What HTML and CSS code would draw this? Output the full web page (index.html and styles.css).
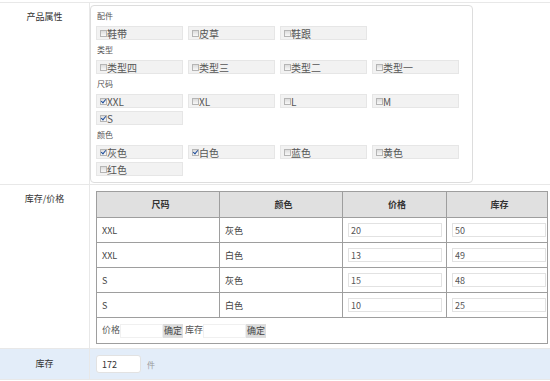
FILE: index.html
```html
<!DOCTYPE html>
<html>
<head>
    <meta charset="utf-8"/>
    <title>商品库存</title>
    <link rel="stylesheet" href="styles.css">
</head>
<body>
<table class="form">
    <tr class="row-attr">
        <td class="label">产品属性</td>
        <td class="field">
            <div class="attr-box">
                <div class="group">
                    <div class="group-title">配件</div>
                    <div class="options">
                        <label class="opt"><span class="cb"></span>鞋带</label>
                        <label class="opt"><span class="cb"></span>皮草</label>
                        <label class="opt"><span class="cb"></span>鞋跟</label>
                    </div>
                </div>
                <div class="group">
                    <div class="group-title">类型</div>
                    <div class="options">
                        <label class="opt"><span class="cb"></span>类型四</label>
                        <label class="opt"><span class="cb"></span>类型三</label>
                        <label class="opt"><span class="cb"></span>类型二</label>
                        <label class="opt"><span class="cb"></span>类型一</label>
                    </div>
                </div>
                <div class="group">
                    <div class="group-title">尺码</div>
                    <div class="options">
                        <label class="opt"><span class="cb checked"></span>XXL</label>
                        <label class="opt"><span class="cb"></span>XL</label>
                        <label class="opt"><span class="cb"></span>L</label>
                        <label class="opt"><span class="cb"></span>M</label>
                        <label class="opt"><span class="cb checked"></span>S</label>
                    </div>
                </div>
                <div class="group">
                    <div class="group-title">颜色</div>
                    <div class="options">
                        <label class="opt"><span class="cb checked"></span>灰色</label>
                        <label class="opt"><span class="cb checked"></span>白色</label>
                        <label class="opt"><span class="cb"></span>蓝色</label>
                        <label class="opt"><span class="cb"></span>黄色</label>
                        <label class="opt"><span class="cb"></span>红色</label>
                    </div>
                </div>
            </div>
        </td>
    </tr>
    <tr class="row-sku">
        <td class="label">库存/价格</td>
        <td class="field">
            <table class="sku">
                <tr>
                    <th class="c-size">尺码</th>
                    <th class="c-color">颜色</th>
                    <th class="c-price">价格</th>
                    <th class="c-stock">库存</th>
                </tr>
                <tr>
                    <td>XXL</td>
                    <td>灰色</td>
                    <td><input class="cell-input" value="20"></td>
                    <td><input class="cell-input" value="50"></td>
                </tr>
                <tr>
                    <td>XXL</td>
                    <td>白色</td>
                    <td><input class="cell-input" value="13"></td>
                    <td><input class="cell-input" value="49"></td>
                </tr>
                <tr>
                    <td>S</td>
                    <td>灰色</td>
                    <td><input class="cell-input" value="15"></td>
                    <td><input class="cell-input" value="48"></td>
                </tr>
                <tr>
                    <td>S</td>
                    <td>白色</td>
                    <td><input class="cell-input" value="10"></td>
                    <td><input class="cell-input" value="25"></td>
                </tr>
                <tr>
                    <td colspan="4" class="batch">
                        价格<input class="batch-input"><button class="batch-btn">确定</button>
                        库存<input class="batch-input"><button class="batch-btn">确定</button>
                    </td>
                </tr>
            </table>
        </td>
    </tr>
    <tr class="row-stock">
        <td class="label">库存</td>
        <td class="field">
            <input class="stock-input" value="172"><span class="unit">件</span>
        </td>
    </tr>
</table>
</body>
</html>
```
FILE: styles.css
```css
html,
body {
    margin: 0;
    padding: 0;
    background: #fff;
}

body {
    font-family: "Noto Sans CJK SC", "Noto Sans", sans-serif;
    font-size: 9px;
    color: #333;
}

.form {
    width: 100%;
    margin-top: 2px;
    border-collapse: collapse;
    border-top: 1px solid #e8e8e8;
}

.form > tbody > tr > td {
    border-bottom: 1px solid #e8e8e8;
}

.form .label {
    width: 89px;
    padding: 7px 0 0;
    border-right: 1px solid #e8e8e8;
    text-align: center;
    vertical-align: top;
    line-height: 14px;
    color: #333;
}

.form .field {
    padding: 0;
    vertical-align: top;
}

/* 产品属性 */
.attr-box {
    width: 376px;
    margin: 2px 0 1px;
    padding: 0 0 6px 5px;
    border: 1px solid #ddd;
    border-radius: 4px;
}

.attr-box .group-title {
    height: 20px;
    line-height: 20px;
    padding-left: 1px;
    color: #555;
    font-size: 8px;
}

.attr-box .options {
    display: flex;
    flex-wrap: wrap;
    gap: 3px 5px;
    width: 368px;
}

.attr-box .opt {
    display: flex;
    align-items: center;
    box-sizing: border-box;
    width: 87px;
    height: 14px;
    padding-left: 3px;
    background: #f2f2f2;
    border: 1px solid #e6e6e6;
    color: #555;
    font-size: 10px;
}

.attr-box .cb {
    position: relative;
    box-sizing: border-box;
    width: 7px;
    height: 7px;
    border: 1px solid #b5b5b5;
    background: linear-gradient(to bottom, #dcdcdc, #f8f8f8);
}

.attr-box .cb.checked::after {
    content: "";
    position: absolute;
    left: 1px;
    top: -1px;
    width: 2px;
    height: 4px;
    border: solid #1f4e9c;
    border-width: 0 1px 1px 0;
    transform: rotate(40deg);
}

/* 库存/价格 */
.row-sku .field {
    padding: 6px 0 4px 6px;
}

.sku {
    width: 452px;
    border-collapse: collapse;
    border: 1px solid #999;
}

.sku th,
.sku td {
    height: 24px;
    padding: 0 0 0 5px;
    border: 1px solid #9e9e9e;
    text-align: left;
    color: #444;
    font-size: 9px;
}

.sku th {
    height: 25px;
    background: #e0e0e0;
    text-align: center;
    font-weight: bold;
    color: #333;
}

.sku .c-size {
    width: 117px;
}

.sku .c-color {
    width: 117px;
}

.sku .c-price {
    width: 98px;
}

.cell-input {
    box-sizing: border-box;
    width: 94px;
    height: 14px;
    margin: 0;
    padding: 0 2px;
    border: 1px solid #e2e2e2;
    font-family: inherit;
    font-size: 9px;
    color: #555;
    outline: none;
}

.sku .batch {
    height: 25px;
    color: #555;
}

.batch-input {
    box-sizing: border-box;
    width: 43px;
    height: 14px;
    margin: 0;
    padding: 0;
    border: 1px solid #f0f0f0;
    vertical-align: middle;
}

.batch-btn {
    height: 14px;
    margin: 0;
    padding: 0 1px;
    border: 0;
    background: #ddd;
    font-family: inherit;
    font-size: 9px;
    color: #444;
    vertical-align: middle;
}

/* 库存 */
.row-stock td {
    background: #e3edf9;
    height: 30px;
}

.row-stock .label {
    padding: 0;
    vertical-align: middle;
}

.row-stock .field {
    padding-left: 6px;
    vertical-align: middle;
}

.stock-input {
    box-sizing: border-box;
    width: 45px;
    height: 18px;
    margin: 0;
    padding: 0 5px;
    border: 1px solid #e2e2e2;
    border-radius: 3px;
    background: #fff;
    font-family: inherit;
    font-size: 9px;
    color: #333;
    vertical-align: middle;
}

.unit {
    margin-left: 6px;
    color: #999;
    font-size: 8px;
    vertical-align: middle;
}
```
